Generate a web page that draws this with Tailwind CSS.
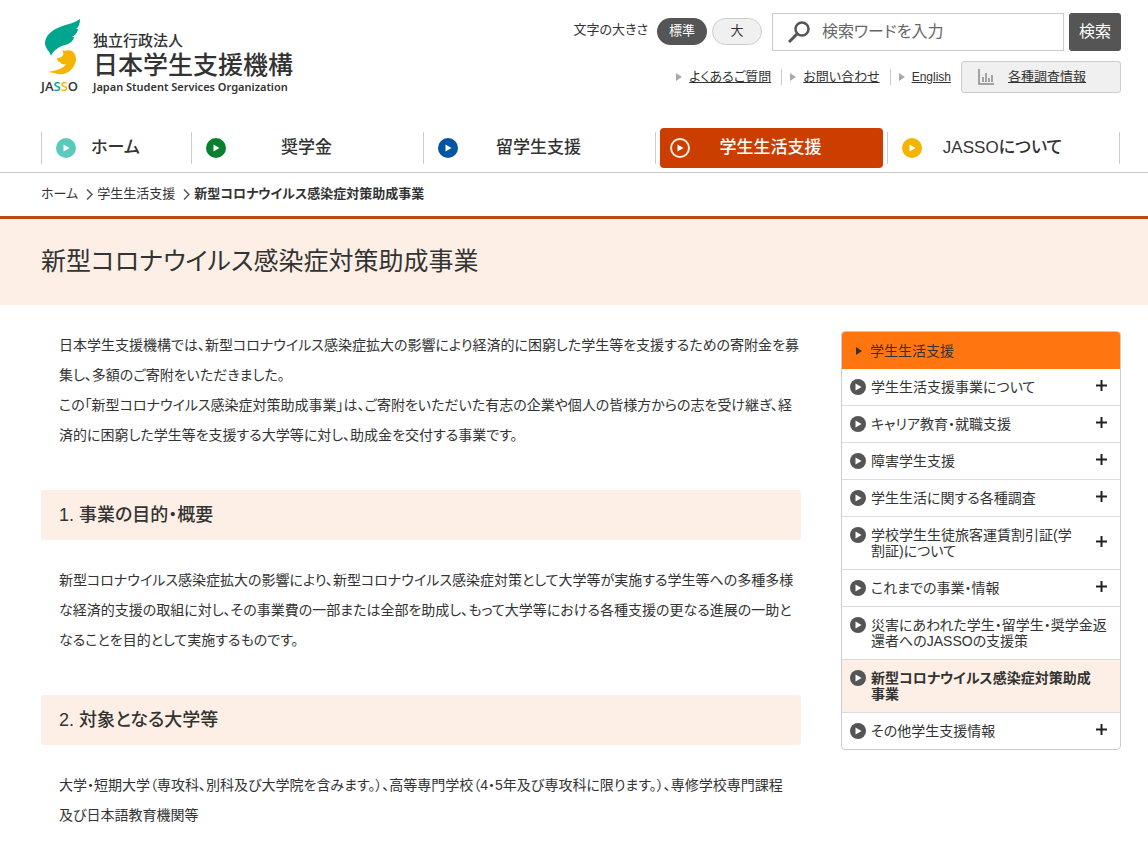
<!DOCTYPE html>
<html lang="ja">
<head>
  <meta charset="UTF-8" />
  <meta name="viewport" content="width=device-width, initial-scale=1.0"/>
  <title>新型コロナウイルス感染症対策助成事業 | JASSO</title>
  <script src="https://cdn.jsdelivr.net/npm/@tailwindcss/browser@4"></script>
</head>
<body class="bg-white text-[#333] text-sm font-['Liberation_Sans','Noto_Sans_CJK_JP',sans-serif] [font-feature-settings:'palt']">

  <!-- Icons -->
  <svg class="hidden" aria-hidden="true">
    <symbol id="play" viewBox="0 0 20 20">
      <circle cx="10" cy="10" r="10" fill="currentColor"/>
      <path d="M7.5 6.5v7l6-3.5z" fill="#fff"/>
    </symbol>
    <symbol id="play-side" viewBox="0 0 16 16">
      <circle cx="8" cy="8" r="8" fill="#555"/>
      <path d="M5.5 4.5v7l6-3.5z" fill="#fff"/>
    </symbol>
    <symbol id="plus" viewBox="0 0 11 11">
      <path d="M5.5 0v11M0 5.5h11" stroke="#222" stroke-width="2"/>
    </symbol>
    <symbol id="arrow" viewBox="0 0 6 8">
      <path d="M0 0v8l6-4z" fill="currentColor"/>
    </symbol>
  </svg>

  <!-- Header -->
  <header class="border-b border-[#ccc]">
    <div class="flex justify-between pl-[41px] pr-[27px] pt-[13px]">
      <a href="#" class="flex gap-3 pt-[5px]">
        <span class="flex flex-col w-10">
          <svg class="w-10 h-[60px]" viewBox="0 0 40 60" aria-hidden="true">
            <path d="M39 1C34 5 26 6 19 9C9 13 4 19 4 25C4 31 9 33 10 38C12 33 17 29 24 27C29 26 33 22 33 19L31 19C35 17 37 13 37 11L35 11C38 9 39 5 39 1Z" fill="#00a58e"/>
            <path d="M21 32C24 34 27 31 31 33C34 35 35 38 35 42C34 50 26 58 17 56C13 55 10 54 6 54C14 53 22 51 25 46C23 47 20 46 19 44C17 44 16 42 16 40C22 40 24 36 21 32Z" fill="#f5b400"/>
          </svg>
          <span class="text-[13px] leading-4 font-semibold font-['Open_Sans',sans-serif]">JA<span class="text-[#00a58e]">S</span><span class="text-[#f5b400]">S</span>O</span>
        </span>
        <span class="flex flex-col pt-[13px] whitespace-nowrap">
          <span class="text-[15px] leading-5 font-medium">独立行政法人</span>
          <span class="text-[25px] leading-7 font-medium">日本学生支援機構</span>
          <span class="text-[11px] leading-4 font-semibold font-['Noto_Sans',sans-serif]">Japan Student Services Organization</span>
        </span>
      </a>

      <div class="flex flex-col items-end gap-[10px]">
        <div class="flex gap-[5px]">
          <div class="flex items-start gap-[5px] pt-[5px] mr-[5px]">
            <span class="text-[13px] leading-6 mr-1">文字の大きさ</span>
            <button type="button" class="w-[50px] h-[27px] rounded-full bg-[#555] text-white text-[13px]">標準</button>
            <button type="button" class="w-[50px] h-[27px] rounded-full bg-[#f0f0f0] border border-[#ccc] text-[13px]">大</button>
          </div>
          <form class="flex gap-[5px]">
            <label class="flex items-center gap-3 w-[292px] h-[38px] px-[15px] border border-[#ccc]">
              <svg class="w-[22px] h-[22px]" viewBox="0 0 22 22" fill="none" stroke="#555" aria-hidden="true">
                <circle cx="14" cy="8" r="6.5" stroke-width="2.5"/>
                <path d="M9.5 12.5L1 21" stroke-width="3"/>
              </svg>
              <input type="text" aria-label="検索ワード" placeholder="検索ワードを入力" class="min-w-0 flex-1 text-base outline-none placeholder:text-[#666]"/>
            </label>
            <button type="submit" class="w-[52px] h-[38px] rounded-[3px] bg-[#555] text-white text-base">検索</button>
          </form>
        </div>
        <ul class="flex items-center text-[13px] whitespace-nowrap">
          <li class="flex items-center gap-[7px] pr-[10px]"><svg class="w-[6px] h-2 text-[#aaa]"><use href="#arrow"/></svg><a href="#" class="underline">よくあるご質問</a></li>
          <li class="flex items-center gap-[7px] px-2 pr-[10px] border-l border-[#ccc] leading-4"><svg class="w-[6px] h-2 text-[#aaa]"><use href="#arrow"/></svg><a href="#" class="underline">お問い合わせ</a></li>
          <li class="flex items-center gap-[7px] px-2 border-l border-[#ccc] leading-4"><svg class="w-[6px] h-2 text-[#aaa]"><use href="#arrow"/></svg><a href="#" class="underline text-xs">English</a></li>
          <li>
            <a href="#" class="flex items-center gap-[14px] w-40 h-8 ml-[2px] pl-4 rounded-[3px] bg-[#f0f0f0] border border-[#ccc]">
              <svg class="w-4 h-4" viewBox="0 0 16 16" fill="none" stroke="#888" aria-hidden="true">
                <path d="M1 0v15H16" stroke-width="1.5"/>
                <path d="M5 13V8M8 13V4M11 13V9M14 13V6" stroke-width="1.5"/>
              </svg>
              <span class="underline">各種調査情報</span>
            </a>
          </li>
        </ul>
      </div>
    </div>

    <!-- Global navigation -->
    <nav class="pl-[41px] pr-[28px] pt-[37px] pb-2">
      <ul class="grid grid-cols-[150fr_232fr_232fr_232fr_233fr] items-center text-[17px] font-medium text-center">
        <li class="border-l border-[#ccc] h-8 flex items-center px-[14px]">
          <svg class="w-5 h-5 text-[#5bcabd]"><use href="#play"/></svg><a href="#" class="flex-1 pr-[22px]">ホーム</a>
        </li>
        <li class="border-l border-[#ccc] h-8 flex items-center px-[14px]">
          <svg class="w-5 h-5 text-[#088030]"><use href="#play"/></svg><a href="#" class="flex-1 pr-[22px]">奨学金</a>
        </li>
        <li class="border-l border-[#ccc] h-8 flex items-center px-[14px]">
          <svg class="w-5 h-5 text-[#0055a2]"><use href="#play"/></svg><a href="#" class="flex-1 pr-[22px]">留学生支援</a>
        </li>
        <li class="border-l border-[#ccc] h-8 flex items-center px-1">
          <a href="#" class="flex flex-1 items-center h-10 px-[10px] rounded bg-[#cb3e00] text-white">
            <svg class="w-5 h-5" viewBox="0 0 20 20" aria-hidden="true"><circle cx="10" cy="10" r="9" fill="none" stroke="#ffeedd" stroke-width="2"/><path d="M7.5 6.5v7l6-3.5z" fill="#fff"/></svg>
            <span class="flex-1 pr-[22px]">学生生活支援</span>
          </a>
        </li>
        <li class="border-x border-[#ccc] h-8 flex items-center px-[14px]">
          <svg class="w-5 h-5 text-[#f5b400]"><use href="#play"/></svg><a href="#" class="flex-1 pr-[22px]">JASSOについて</a>
        </li>
      </ul>
    </nav>
  </header>

  <!-- Breadcrumb -->
  <ol class="flex items-center h-[43px] pl-[41px] text-[13px]">
    <li><a href="#">ホーム</a></li>
    <li class="flex items-center"><svg class="w-[7px] h-[11px] ml-2 mr-1" viewBox="0 0 7 11" fill="none" stroke="#555" stroke-width="1.5"><path d="M1 .5L6 5.5L1 10.5"/></svg><a href="#">学生生活支援</a></li>
    <li class="flex items-center"><svg class="w-[7px] h-[11px] ml-2 mr-1" viewBox="0 0 7 11" fill="none" stroke="#555" stroke-width="1.5"><path d="M1 .5L6 5.5L1 10.5"/></svg><b>新型コロナウイルス感染症対策助成事業</b></li>
  </ol>

  <!-- Page title -->
  <div class="flex items-center h-[89px] pl-[41px] border-t-3 border-[#b8481a] bg-[#fdefe5]">
    <h1 class="text-[25px]">新型コロナウイルス感染症対策助成事業</h1>
  </div>

  <div class="flex items-start gap-10 pl-[41px] pr-[27px] pt-[25px]">
    <main class="flex-1 leading-[30px]">
      <p class="pl-[18px]">日本学生支援機構では、新型コロナウイルス感染症拡大の影響により経済的に困窮した学生等を支援するための寄附金を募集し、多額のご寄附をいただきました。<br>この「新型コロナウイルス感染症対策助成事業」は、ご寄附をいただいた有志の企業や個人の皆様方からの志を受け継ぎ、経済的に困窮した学生等を支援する大学等に対し、助成金を交付する事業です。</p>

      <h2 class="mt-10 mb-[25px] px-[18px] py-[10px] rounded-[3px] bg-[#fdefe5] text-lg leading-[30px] font-medium">1. 事業の目的・概要</h2>
      <p class="pl-[18px]">新型コロナウイルス感染症拡大の影響により、新型コロナウイルス感染症対策として大学等が実施する学生等への多種多様な経済的支援の取組に対し、その事業費の一部または全部を助成し、もって大学等における各種支援の更なる進展の一助となることを目的として実施するものです。</p>

      <h2 class="mt-10 mb-[25px] px-[18px] py-[10px] rounded-[3px] bg-[#fdefe5] text-lg leading-[30px] font-medium">2. 対象となる大学等</h2>
      <p class="pl-[18px]">大学・短期大学（専攻科、別科及び大学院を含みます。）、高等専門学校（4・5年及び専攻科に限ります。）、専修学校専門課程<span class="whitespace-nowrap">及び</span>日本語教育機関等</p>
    </main>

    <!-- Side menu -->
    <aside class="w-[280px] mt-px border border-[#ccc] rounded overflow-hidden leading-4">
      <a href="#" class="flex items-center gap-2 h-[37px] pl-[14px] bg-[#ff7510]"><svg class="w-[6px] h-2"><use href="#arrow"/></svg>学生生活支援</a>
      <ul class="divide-y divide-[#ddd]">
        <li class="flex py-[10px] pl-2 pr-[13px]"><svg class="w-4 h-4 mr-[5px] shrink-0"><use href="#play-side"/></svg><a href="#" class="flex-1 pr-5">学生生活支援事業について</a><button type="button" aria-label="開く" class="self-center pb-1"><svg class="w-[11px] h-[11px]"><use href="#plus"/></svg></button></li>
        <li class="flex py-[10px] pl-2 pr-[13px]"><svg class="w-4 h-4 mr-[5px] shrink-0"><use href="#play-side"/></svg><a href="#" class="flex-1 pr-5">キャリア教育・就職支援</a><button type="button" aria-label="開く" class="self-center pb-1"><svg class="w-[11px] h-[11px]"><use href="#plus"/></svg></button></li>
        <li class="flex py-[10px] pl-2 pr-[13px]"><svg class="w-4 h-4 mr-[5px] shrink-0"><use href="#play-side"/></svg><a href="#" class="flex-1 pr-5">障害学生支援</a><button type="button" aria-label="開く" class="self-center pb-1"><svg class="w-[11px] h-[11px]"><use href="#plus"/></svg></button></li>
        <li class="flex py-[10px] pl-2 pr-[13px]"><svg class="w-4 h-4 mr-[5px] shrink-0"><use href="#play-side"/></svg><a href="#" class="flex-1 pr-5">学生生活に関する各種調査</a><button type="button" aria-label="開く" class="self-center pb-1"><svg class="w-[11px] h-[11px]"><use href="#plus"/></svg></button></li>
        <li class="flex py-[10px] pl-2 pr-[13px]"><svg class="w-4 h-4 mr-[5px] shrink-0"><use href="#play-side"/></svg><a href="#" class="flex-1 pr-5">学校学生生徒旅客運賃割引証(学割証)について</a><button type="button" aria-label="開く" class="self-center pb-1"><svg class="w-[11px] h-[11px]"><use href="#plus"/></svg></button></li>
        <li class="flex py-[10px] pl-2 pr-[13px]"><svg class="w-4 h-4 mr-[5px] shrink-0"><use href="#play-side"/></svg><a href="#" class="flex-1 pr-5">これまでの事業・情報</a><button type="button" aria-label="開く" class="self-center pb-1"><svg class="w-[11px] h-[11px]"><use href="#plus"/></svg></button></li>
        <li class="flex py-[10px] pl-2 pr-[11px]"><svg class="w-4 h-4 mr-[5px] shrink-0"><use href="#play-side"/></svg><a href="#" class="flex-1">災害にあわれた学生・留学生・奨学金返還者へのJASSOの支援策</a></li>
        <li class="flex py-[10px] pl-2 pr-5 bg-[#fdefe5]"><svg class="w-4 h-4 mr-[5px] shrink-0"><use href="#play-side"/></svg><a href="#" class="flex-1 font-bold">新型コロナウイルス感染症対策助成事業</a></li>
        <li class="flex py-[10px] pl-2 pr-[13px]"><svg class="w-4 h-4 mr-[5px] shrink-0"><use href="#play-side"/></svg><a href="#" class="flex-1 pr-5">その他学生支援情報</a><button type="button" aria-label="開く" class="self-center pb-1"><svg class="w-[11px] h-[11px]"><use href="#plus"/></svg></button></li>
      </ul>
    </aside>
  </div>
</body>
</html>
